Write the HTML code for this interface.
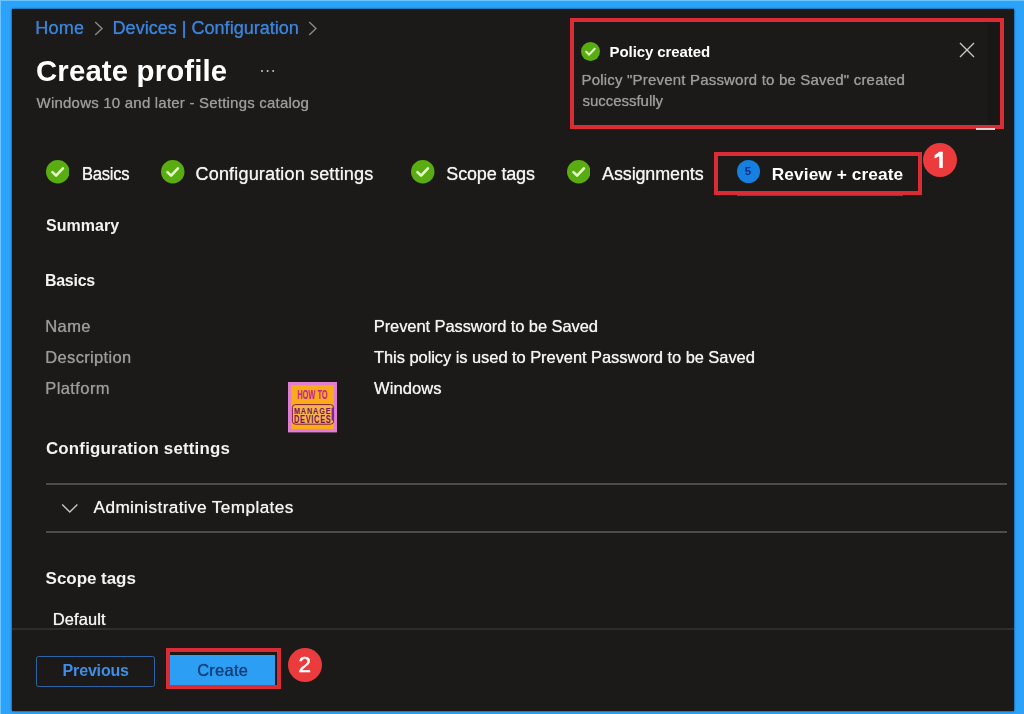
<!DOCTYPE html>
<html><head><meta charset="utf-8"><title>Create profile</title>
<style>
html,body{margin:0;padding:0}
body{width:1024px;height:714px;overflow:hidden;background:#2ba3fb;position:relative;font-family:"Liberation Sans",sans-serif}
.a{position:absolute;display:block}
.t{position:absolute;line-height:1;white-space:nowrap;transform-origin:0 0;}
.r{text-shadow:0 0 0.8px currentColor}
#panel{left:12px;top:9px;width:1001.5px;height:701.5px;background:#1b1a19;box-shadow:0 0 2px 0 #0a2a4a}
.red{border:4px solid #db2c36;box-sizing:border-box}
.badge{border-radius:50%;background:#ec3b3d}
.hl{height:1.6px;background:#4d4c4b}
</style></head><body>
<div class="a" style="left:0;top:0;width:1024px;height:1px;background:#6cc4fc"></div>
<div class="a" style="left:0;top:0;width:1px;height:714px;background:#6cc4fc"></div>
<div class="a" id="panel"></div>

<!-- breadcrumb chevrons -->
<svg class="a" style="left:94px;top:21px" width="10" height="15" viewBox="0 0 10 15"><path d="M1.2 1 L8 7.5 L1.2 14" fill="none" stroke="#8a8886" stroke-width="1.4"/></svg>
<svg class="a" style="left:308px;top:21px" width="10" height="15" viewBox="0 0 10 15"><path d="M1.2 1 L8 7.5 L1.2 14" fill="none" stroke="#8a8886" stroke-width="1.4"/></svg>
<!-- ellipsis -->
<div class="a" style="left:261px;top:70px;width:2.4px;height:2.4px;border-radius:50%;background:#c8c6c4;box-shadow:5.6px 0 0 #c8c6c4,11.2px 0 0 #c8c6c4"></div>

<!-- toast -->
<div class="a red" style="left:569.5px;top:18px;width:434.7px;height:111px;background:#1b1a19;border-width:4.5px"></div>
<div class="a" style="left:988px;top:22.5px;width:11px;height:102px;background:#181716"></div>
<svg class="a" style="left:581.10px;top:42.10px" width="19" height="19" viewBox="0 0 24 24"><circle cx="12" cy="12" r="12" fill="#5aad10"/><path d="M6.6 12.4 L10.3 16 L17.3 8.6" fill="none" stroke="#e4ffc8" stroke-width="2.6" stroke-linecap="round" stroke-linejoin="round"/></svg>
<svg class="a" style="left:959px;top:42px" width="16" height="16" viewBox="0 0 16 16"><path d="M1 1 L15 15 M15 1 L1 15" stroke="#c8c6c4" stroke-width="1.4" fill="none"/></svg>
<div class="a" style="left:976px;top:127.8px;width:19px;height:2.4px;background:#e6cccc"></div>

<!-- steps -->
<svg class="a" style="left:45.85px;top:160.25px" width="23.5" height="23.5" viewBox="0 0 24 24"><circle cx="12" cy="12" r="12" fill="#5aad10"/><path d="M6.6 12.4 L10.3 16 L17.3 8.6" fill="none" stroke="#e4ffc8" stroke-width="2.6" stroke-linecap="round" stroke-linejoin="round"/></svg>
<svg class="a" style="left:161.05px;top:160.25px" width="23.5" height="23.5" viewBox="0 0 24 24"><circle cx="12" cy="12" r="12" fill="#5aad10"/><path d="M6.6 12.4 L10.3 16 L17.3 8.6" fill="none" stroke="#e4ffc8" stroke-width="2.6" stroke-linecap="round" stroke-linejoin="round"/></svg>
<svg class="a" style="left:411.25px;top:160.25px" width="23.5" height="23.5" viewBox="0 0 24 24"><circle cx="12" cy="12" r="12" fill="#5aad10"/><path d="M6.6 12.4 L10.3 16 L17.3 8.6" fill="none" stroke="#e4ffc8" stroke-width="2.6" stroke-linecap="round" stroke-linejoin="round"/></svg>
<svg class="a" style="left:566.65px;top:160.25px" width="23.5" height="23.5" viewBox="0 0 24 24"><circle cx="12" cy="12" r="12" fill="#5aad10"/><path d="M6.6 12.4 L10.3 16 L17.3 8.6" fill="none" stroke="#e4ffc8" stroke-width="2.6" stroke-linecap="round" stroke-linejoin="round"/></svg>
<div class="a" style="left:737px;top:193px;width:166px;height:3px;background:#2c5aa0"></div>
<div class="a red" style="left:714.3px;top:151.5px;width:207.5px;height:43.2px"></div>
<div class="a" style="left:736.7px;top:160.3px;width:22.9px;height:22.9px;border-radius:50%;background:#1580e0"></div>
<div class="a badge" style="left:922.70px;top:142.70px;width:34.4px;height:34.4px"></div>
<svg class="a" style="left:933px;top:151px" width="12" height="18" viewBox="0 0 12 18"><path d="M6.3 0.8 L9.8 0.8 L9.8 17 L6.2 17 L6.2 5.2 L1.6 7.4 L1.6 4.2 Z" fill="#fff"/></svg>

<!-- logo -->
<svg class="a" style="left:287.6px;top:382.4px" width="49.2" height="50.4" viewBox="0 0 49.2 50.4" font-family="Liberation Sans, sans-serif" font-weight="700">
<rect x="0" y="0" width="49.2" height="50.4" fill="#e07fd2"/>
<rect x="3.2" y="3.2" width="42.6" height="43.8" fill="#fbab18"/>
<rect x="4.4" y="22.6" width="41.2" height="19.6" rx="3" ry="3" fill="#f7b24a" stroke="#7a1f3f" stroke-width="1"/>
<rect x="43.6" y="25.5" width="2.4" height="13" rx="1" fill="#8a1fa0"/>
<text x="9.2" y="17.2" font-size="12.7" fill="#c3209f" textLength="30.4" lengthAdjust="spacingAndGlyphs">HOW TO</text>
<text x="5.9" y="31.6" font-size="9.4" fill="#6d165f" textLength="37.6" lengthAdjust="spacingAndGlyphs" letter-spacing="1.2">MANAGE</text>
<text x="5.9" y="40.6" font-size="10" fill="#6d165f" textLength="37.6" lengthAdjust="spacingAndGlyphs" letter-spacing="1">DEVICES</text>
</svg>
<!-- config lines -->
<div class="a hl" style="left:46px;top:483px;width:961px"></div>
<div class="a hl" style="left:46px;top:531px;width:961px"></div>
<svg class="a" style="left:61px;top:503px" width="18" height="11" viewBox="0 0 18 11"><path d="M1.2 1.5 L8.8 9 L16.4 1.5" fill="none" stroke="#c8c6c4" stroke-width="1.4"/></svg>

<!-- footer -->
<div class="a" style="left:12px;top:628px;width:1001.5px;height:1.5px;background:#2e2d2c"></div>
<div class="a" style="left:35.6px;top:655.6px;width:119.4px;height:31.3px;border:1.5px solid #2c66a8;border-radius:2.5px;box-sizing:border-box"></div>
<div class="a" style="left:169px;top:655px;width:105.5px;height:31px;background:#2c9ff4"></div>
<div class="a red" style="left:166px;top:647.5px;width:115.2px;height:41px;border-width:4.5px"></div>
<div class="a badge" style="left:287.50px;top:648.00px;width:34px;height:34px"></div>

<div id="txt" class="a" style="left:0;top:0;width:1024px;height:714px;will-change:transform">
<span class="t r" id="bc1" style="left:35.35px;top:19.16px;font-size:18px;font-weight:400;color:#3c82d8;letter-spacing:0.250px">Home</span>
<span class="t r" id="bc2" style="left:112.60px;top:19.16px;font-size:18px;font-weight:400;color:#3c82d8;letter-spacing:0.023px">Devices | Configuration</span>
<span class="t" id="title" style="left:35.60px;top:56.28px;font-size:29.5px;font-weight:700;color:#ffffff;letter-spacing:0.154px;transform:scaleX(0.9948)">Create profile</span>
<span class="t r" id="sub" style="left:36.60px;top:94.80px;font-size:15px;font-weight:400;color:#9c9a98;letter-spacing:0.211px">Windows 10 and later - Settings catalog</span>
<span class="t r" id="s1" style="left:81.60px;top:165.16px;font-size:18px;font-weight:400;color:#f3f2f1;letter-spacing:-0.300px;transform:scaleX(0.9208)">Basics</span>
<span class="t r" id="s2" style="left:195.60px;top:165.16px;font-size:18px;font-weight:400;color:#f3f2f1;letter-spacing:0.167px">Configuration settings</span>
<span class="t r" id="s3" style="left:446.35px;top:165.16px;font-size:18px;font-weight:400;color:#f3f2f1;letter-spacing:-0.167px">Scope tags</span>
<span class="t r" id="s4" style="left:602.10px;top:165.16px;font-size:18px;font-weight:400;color:#f3f2f1;letter-spacing:-0.150px">Assignments</span>
<span class="t" id="s5" style="left:771.80px;top:165.96px;font-size:17.3px;font-weight:700;color:#ffffff;letter-spacing:0.086px">Review + create</span>
<span class="t" id="summary" style="left:46.00px;top:217.86px;font-size:16px;font-weight:700;color:#f3f2f1;letter-spacing:0.033px">Summary</span>
<span class="t" id="hb" style="left:45.35px;top:271.61px;font-size:17px;font-weight:700;color:#f3f2f1;letter-spacing:-0.300px;transform:scaleX(0.9400)">Basics</span>
<span class="t r" id="l1" style="left:45.35px;top:318.03px;font-size:16.5px;font-weight:400;color:#9c9a98;letter-spacing:0.350px">Name</span>
<span class="t r" id="l2" style="left:45.35px;top:349.03px;font-size:16.5px;font-weight:400;color:#9c9a98;letter-spacing:0.335px">Description</span>
<span class="t r" id="l3" style="left:45.35px;top:379.78px;font-size:16.5px;font-weight:400;color:#9c9a98;letter-spacing:0.393px">Platform</span>
<span class="t r" id="v1" style="left:373.80px;top:318.03px;font-size:16.5px;font-weight:400;color:#f3f2f1;letter-spacing:-0.089px">Prevent Password to be Saved</span>
<span class="t r" id="v2" style="left:374.00px;top:348.53px;font-size:16.5px;font-weight:400;color:#f3f2f1;letter-spacing:-0.068px">This policy is used to Prevent Password to be Saved</span>
<span class="t r" id="v3" style="left:374.00px;top:379.53px;font-size:16.5px;font-weight:400;color:#f3f2f1;letter-spacing:0.100px">Windows</span>
<span class="t" id="hc" style="left:46.35px;top:440.01px;font-size:17px;font-weight:700;color:#f3f2f1;letter-spacing:0.179px;transform:scaleX(0.9932)">Configuration settings</span>
<span class="t r" id="adm" style="left:93.60px;top:498.84px;font-size:17.2px;font-weight:400;color:#f3f2f1;letter-spacing:0.391px">Administrative Templates</span>
<span class="t" id="hs" style="left:45.60px;top:569.61px;font-size:17px;font-weight:700;color:#f3f2f1;letter-spacing:-0.044px">Scope tags</span>
<span class="t r" id="def" style="left:52.80px;top:611.33px;font-size:16.5px;font-weight:400;color:#f3f2f1;letter-spacing:0.100px">Default</span>
<span class="t" id="prev" style="left:62.60px;top:662.71px;font-size:16px;font-weight:700;color:#3b8fe6;letter-spacing:-0.171px">Previous</span>
<span class="t r" id="create" style="left:197.20px;top:662.28px;font-size:16.5px;font-weight:400;color:#0d3f7a;letter-spacing:0.240px">Create</span>
<span class="t" id="tt" style="left:609.60px;top:44.30px;font-size:15px;font-weight:700;color:#ffffff;letter-spacing:-0.096px">Policy created</span>
<span class="t r" id="tb1" style="left:581.60px;top:72.30px;font-size:15px;font-weight:400;color:#9c9a98;letter-spacing:0.189px">Policy &quot;Prevent Password to be Saved&quot; created</span>
<span class="t r" id="tb2" style="left:582.60px;top:92.80px;font-size:15px;font-weight:400;color:#9c9a98;letter-spacing:-0.045px">successfully</span>
<span class="t" style="left:298.4px;top:654.0px;font-size:22.5px;color:#fff;-webkit-text-stroke:0.5px #fff">2</span>
<span class="t" style="left:744.8px;top:166px;font-size:11.5px;font-weight:700;color:#0a2a8a">5</span>
</div>
</body></html>
